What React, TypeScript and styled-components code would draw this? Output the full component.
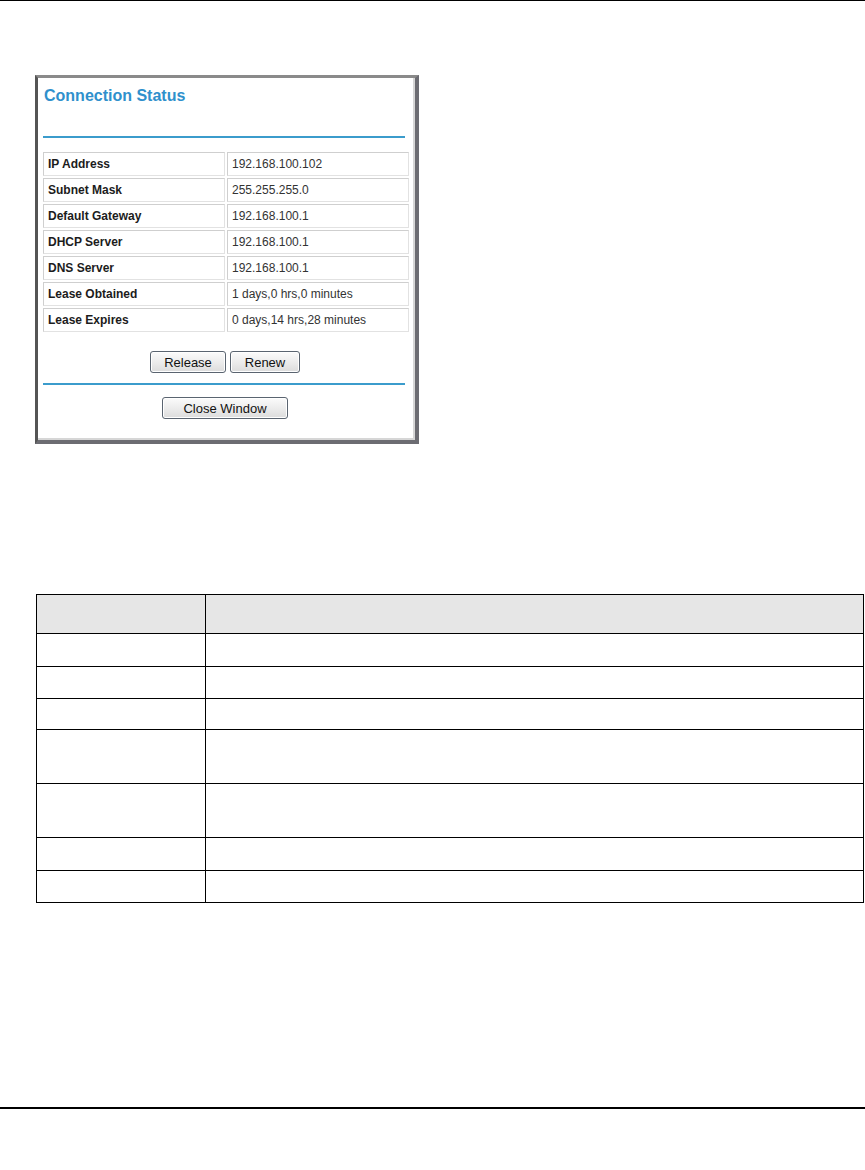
import styled, { createGlobalStyle } from "styled-components";

const GlobalStyle = createGlobalStyle`
  html, body {
    margin: 0;
    padding: 0;
    background: #ffffff;
  }
  body {
    font-family: "Liberation Sans", Arial, sans-serif;
    color: #000;
  }
`;

const Page = styled.div`
  width: 865px;
  height: 1170px;
  box-sizing: border-box;
  border-top: 1px solid #000;
  display: flex;
  flex-direction: column;
`;

const Body = styled.div`
  flex: 1;
  display: flex;
  flex-direction: column;
  padding: 74px 0 0 35px;
  border-bottom: 2px solid #000;
  box-sizing: border-box;
  max-height: 1108px;
`;

const Panel = styled.div`
  width: 384px;
  height: 369px;
  box-sizing: border-box;
  background: #fff;
  border-style: solid;
  border-width: 3px 4px 4px 3px;
  border-color: #8a8a8a #6c6c72 #6c6c72 #555;
  box-shadow: inset -2px -2px 0 #d6d6d6;
  padding: 9px 8px 0 5px;
  display: flex;
  flex-direction: column;
`;

const Title = styled.div`
  font-weight: bold;
  font-size: 16px;
  line-height: 18px;
  color: #2f90cc;
  padding-left: 1px;
`;

const BlueRule = styled.div<{ $top: number }>`
  height: 2px;
  background: #3b9ccc;
  margin: ${(p) => p.$top}px 2px 0 0;
`;

const InfoTable = styled.table`
  margin-top: 12px;
  width: 370px;
  border-collapse: separate;
  border-spacing: 2px;
  margin-left: -2px;
  font-size: 12px;
`;

const InfoCell = styled.td<{ $label?: boolean }>`
  height: 20px;
  padding: 1px 4px;
  border: 1px solid #cfcfcf;
  border-right-color: #e2e2e2;
  border-bottom-color: #e2e2e2;
  width: 50%;
  font-weight: ${(p) => (p.$label ? "bold" : "normal")};
  color: ${(p) => (p.$label ? "#1c1c1c" : "#333")};
  white-space: nowrap;
`;

const ButtonRow = styled.div<{ $top: number }>`
  display: flex;
  justify-content: center;
  gap: 4px;
  margin-top: ${(p) => p.$top}px;
`;

const Button = styled.button<{ $w: number }>`
  width: ${(p) => p.$w}px;
  height: 22px;
  padding: 0;
  font-family: "Liberation Sans", Arial, sans-serif;
  font-size: 13px;
  color: #111;
  border: 1px solid #5a6470;
  border-radius: 3px;
  background: linear-gradient(#fbfbfb, #e9e9e9 60%, #dcdcdc);
  box-shadow: inset 0 0 0 1px #fff;
`;

const DocTable = styled.table`
  margin-top: 150px;
  width: 828px;
  border-collapse: collapse;
  margin-left: 1px;
`;

const HeadCell = styled.th<{ $w?: number }>`
  background: #e6e6e6;
  border: 1px solid #000;
  height: 38px;
  padding: 0;
  ${(p) => (p.$w ? `width: ${p.$w}px;` : "")}
`;

const DocCell = styled.td<{ $h: number }>`
  border: 1px solid #000;
  height: ${(p) => p.$h}px;
  padding: 0;
`;

const info: [string, string][] = [
  ["IP Address", "192.168.100.102"],
  ["Subnet Mask", "255.255.255.0"],
  ["Default Gateway", "192.168.100.1"],
  ["DHCP Server", "192.168.100.1"],
  ["DNS Server", "192.168.100.1"],
  ["Lease Obtained", "1 days,0 hrs,0 minutes"],
  ["Lease Expires", "0 days,14 hrs,28 minutes"],
];

const rowHeights = [32, 31, 30, 53, 53, 32, 31];

export default function App() {
  return (
    <>
      <GlobalStyle />
      <Page>
        <Body>
          <Panel>
            <Title>Connection Status</Title>
            <BlueRule $top={31} />
            <InfoTable>
              <tbody>
                {info.map(([k, v]) => (
                  <tr key={k}>
                    <InfoCell $label>{k}</InfoCell>
                    <InfoCell>{v}</InfoCell>
                  </tr>
                ))}
              </tbody>
            </InfoTable>
            <ButtonRow $top={17}>
              <Button $w={76}>Release</Button>
              <Button $w={70}>Renew</Button>
            </ButtonRow>
            <BlueRule $top={10} />
            <ButtonRow $top={12}>
              <Button $w={126}>Close Window</Button>
            </ButtonRow>
          </Panel>
          <DocTable>
            <thead>
              <tr>
                <HeadCell $w={168} />
                <HeadCell />
              </tr>
            </thead>
            <tbody>
              {rowHeights.map((h, i) => (
                <tr key={i}>
                  <DocCell $h={h} />
                  <DocCell $h={h} />
                </tr>
              ))}
            </tbody>
          </DocTable>
        </Body>
      </Page>
    </>
  );
}
